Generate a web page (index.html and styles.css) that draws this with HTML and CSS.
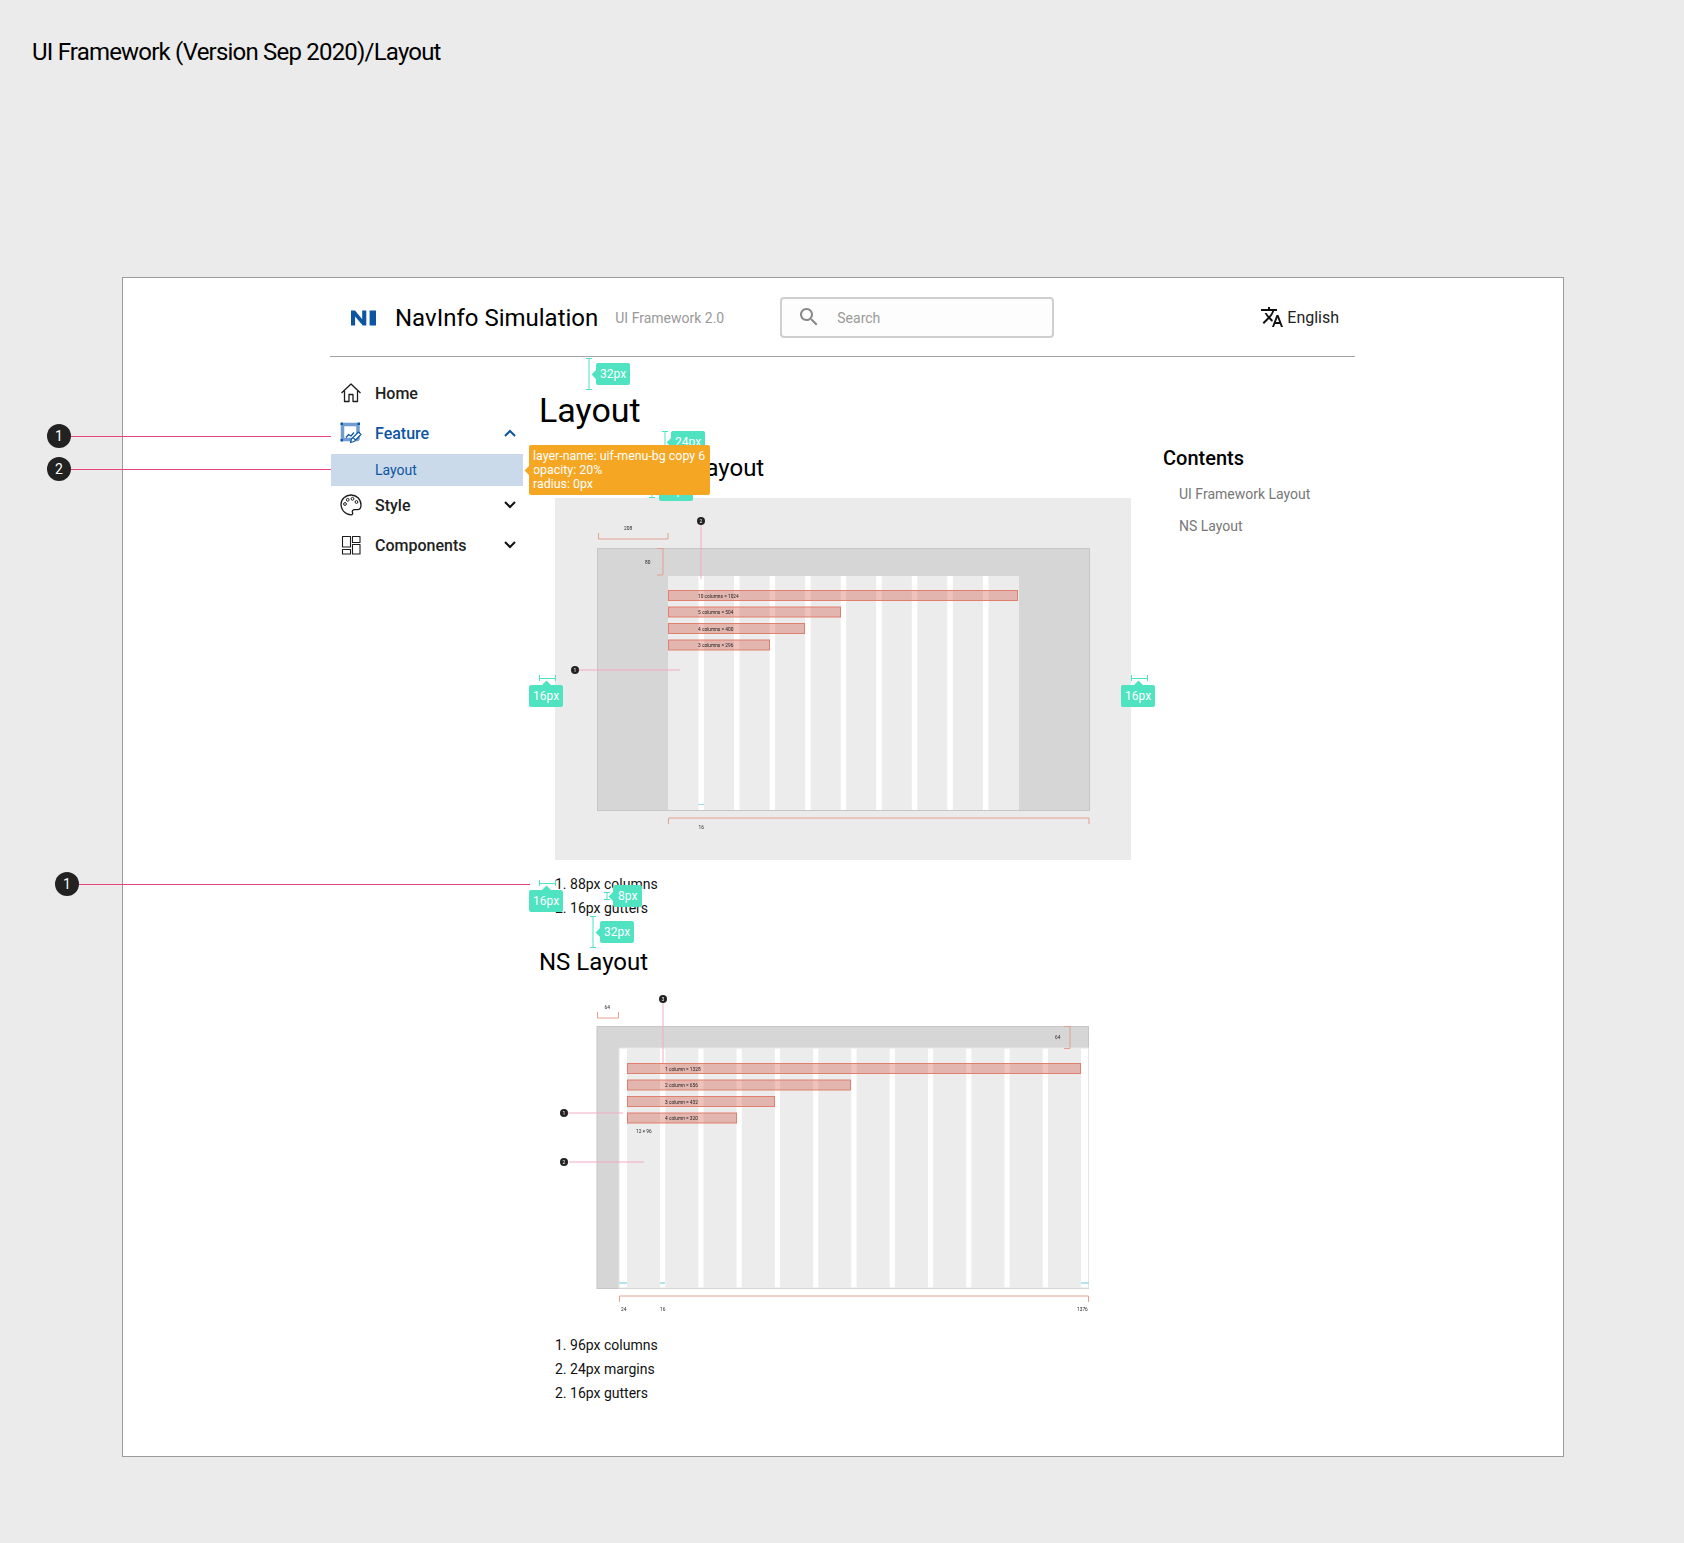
FILE: index.html
```html
<!DOCTYPE html>
<html lang="en">
<head>
<meta charset="utf-8">
<title>UI Framework (Version Sep 2020)/Layout</title>
<link rel="stylesheet" href="styles.css">
</head>
<body>
<div class="page">
  <h1 class="doc-title">UI Framework (Version Sep 2020)/Layout</h1>

  <div class="frame">
    <div class="app">
      <header class="topbar">
        <svg class="logo" viewBox="0 0 26 16" width="26" height="16"><path class="logo-mark" d="M0 15.500V.500h4L11.200 9.200V.500h4.100v15h-3.500L4.100 6.400v9.100zM18.600.500h6.400v15h-6.400z"/></svg>
        <span class="brand">NavInfo Simulation</span>
        <span class="version">UI Framework 2.0</span>
        <div class="search">
          <svg class="search-icon" viewBox="0 0 24 24" width="24" height="24"><path d="M15.500 14h-.79l-.28-.27C15.410 12.590 16 11.110 16 9.500 16 5.910 13.090 3 9.500 3S3 5.910 3 9.500 5.910 16 9.500 16c1.610 0 3.090-.59 4.230-1.570l.27.28v.79l5 4.990L20.490 19l-4.990-5zm-6 0C7.010 14 5 11.990 5 9.500S7.010 5 9.500 5 14 7.010 14 9.500 11.990 14 9.500 14z"/></svg>
          <span class="search-text">Search</span>
        </div>
        <div class="lang">
          <svg viewBox="0 0 24 24" width="24" height="24"><path d="M12.870 15.070l-2.540-2.510.03-.03c1.740-1.940 2.980-4.170 3.710-6.530H17V4h-7V2H8v2H1v1.990h11.170C11.500 7.920 10.440 9.750 9 11.350 8.070 10.320 7.300 9.190 6.690 8h-2c.73 1.630 1.730 3.170 2.980 4.560l-5.090 5.020L4 19l5-5 3.110 3.110.76-2.040zM18.500 10h-2L12 22h2l1.120-3h4.750L21 22h2l-4.500-12zm-2.620 7l1.620-4.330L19.120 17h-3.240z"/></svg>
          <span>English</span>
        </div>
      </header>

      <div class="columns">
        <nav class="sidebar">
          <div class="nav-row">
            <svg class="nav-icon" viewBox="0 0 22 22" width="22" height="22"><path class="line-icon" d="M1.500 11L11 2l9.500 9M4.500 9v10.500h4.500v-7h4v7h4.500V9"/></svg>
            <span class="nav-label">Home</span>
          </div>
          <div class="nav-row nav-row-active">
            <svg class="nav-icon" viewBox="0 0 22 22" width="22" height="22">
              <rect class="feat-frame" x="2.500" y="2.500" width="15.500" height="15" rx="1"/>
              <g class="feat-corner"><rect x="0.500" y="0.500" width="2.500" height="2.500"/><rect x="17.500" y="0.500" width="2.500" height="2.500"/><rect x="0.500" y="17" width="2.500" height="2.500"/></g>
              <path class="feat-chart" d="M6 15.500l2.500-3 2.500 1.500 3-3.500"/>
              <path class="feat-pen" d="M10.500 20.500l1-3.500 7-7 2.500 2.500-7 7zM13 15.500l2.500 2.500"/>
            </svg>
            <span class="nav-label">Feature</span>
            <svg class="chevron" viewBox="0 0 12 8" width="12" height="8"><path d="M1 7l5-5 5 5"/></svg>
          </div>
          <div class="nav-sub">Layout</div>
          <div class="nav-row">
            <svg class="nav-icon" viewBox="0 0 22 22" width="22" height="22">
              <path class="line-icon" d="M11 1C5.500 1 1 5.200 1 10.500S5.500 20.800 11 20.800c1.500 0 2-1 1.500-2.200-.6-1.500.3-3 2-3h3c2.300 0 3.500-1.700 3.500-4.600C21 5.200 16.500 1 11 1z"/>
              <circle class="line-icon-thin" cx="5" cy="10" r="1.400"/><circle class="line-icon-thin" cx="7.700" cy="5.800" r="1.400"/><circle class="line-icon-thin" cx="12.500" cy="4.800" r="1.400"/><circle class="line-icon-thin" cx="16.500" cy="8" r="1.400"/>
            </svg>
            <span class="nav-label">Style</span>
            <svg class="chevron chevron-dark" viewBox="0 0 12 8" width="12" height="8"><path d="M1 1l5 5 5-5"/></svg>
          </div>
          <div class="nav-row">
            <svg class="nav-icon" viewBox="0 0 22 22" width="22" height="22">
              <path class="line-icon line-icon-fine" d="M2.500 2.500h8v10.500h-8zM12.500 2.500h7.500v6h-7.500zM2.500 15.500h8v4.500h-8zM12.500 10.500h7.500v9.500h-7.500z"/>
            </svg>
            <span class="nav-label">Components</span>
            <svg class="chevron chevron-dark" viewBox="0 0 12 8" width="12" height="8"><path d="M1 1l5 5 5-5"/></svg>
          </div>
        </nav>

        <main class="content">
          <h2 class="page-title">Layout</h2>
          <h3 class="section-title">UI Framework Layout</h3>

          <svg class="figure figure-grey" viewBox="0 0 576 362" width="576" height="362">
            <rect class="fig-dark" x="42.500" y="50.500" width="492" height="262"/>
            <rect class="fig-white" x="113.500" y="78" width="350" height="234"/>
            <g class="fig-cols">
              <rect x="113.500" y="78" width="30" height="234"/><rect x="149" y="78" width="30" height="234"/><rect x="184.600" y="78" width="30" height="234"/><rect x="220.100" y="78" width="30" height="234"/><rect x="255.700" y="78" width="30" height="234"/><rect x="291.200" y="78" width="30" height="234"/><rect x="326.800" y="78" width="30" height="234"/><rect x="362.300" y="78" width="30" height="234"/><rect x="397.900" y="78" width="30" height="234"/><rect x="433.500" y="78" width="30" height="234"/>
            </g>
            <g class="fig-bars">
              <rect x="113.500" y="92.500" width="349" height="10"/><rect x="113.500" y="109" width="172" height="10"/><rect x="113.500" y="125.500" width="136" height="10"/><rect x="113.500" y="142" width="101" height="10"/>
            </g>
            <g class="fig-label">
              <text x="143" y="99.500">10 columns = 1024</text><text x="143" y="116">5 columns = 504</text><text x="143" y="132.500">4 columns = 400</text><text x="143" y="149">3 columns = 296</text>
              <text x="69" y="32">208</text><text x="90" y="66">80</text><text x="143.500" y="331">16</text>
            </g>
            <path class="fig-bracket" d="M43.500 35v6h69.500v-6M102 50.500h6v26.500h-6M113.500 326v-6h420.500v6"/>
            <path class="fig-cyan" d="M143 306.500h6"/>
            <path class="fig-pink" d="M146 27v54M24 172h101"/>
            <circle class="fig-dot" cx="146" cy="23" r="4"/><circle class="fig-dot" cx="20" cy="172" r="4"/>
            <g class="fig-dot-text"><text x="146" y="25">2</text><text x="20" y="174">1</text></g>
          </svg>

          <ol class="notes notes-a">
            <li>1. 88px columns</li>
            <li>2. 16px gutters</li>
          </ol>

          <h3 class="section-title section-title-ns">NS Layout</h3>

          <svg class="figure figure-plain" viewBox="0 0 576 335" width="576" height="335">
            <rect class="fig-dark" x="42" y="28.500" width="491.500" height="262"/>
            <rect class="fig-white fig-white-edge" x="64" y="50" width="469.500" height="240"/>
            <g class="fig-cols">
              <rect x="72" y="50" width="33" height="240"/><rect x="110.300" y="50" width="33" height="240"/><rect x="148.500" y="50" width="33" height="240"/><rect x="186.800" y="50" width="33" height="240"/><rect x="225.100" y="50" width="33" height="240"/><rect x="263.300" y="50" width="33" height="240"/><rect x="301.600" y="50" width="33" height="240"/><rect x="339.900" y="50" width="33" height="240"/><rect x="378.200" y="50" width="33" height="240"/><rect x="416.400" y="50" width="33" height="240"/><rect x="454.700" y="50" width="33" height="240"/><rect x="493" y="50" width="33" height="240"/>
            </g>
            <g class="fig-bars">
              <rect x="72.500" y="65.500" width="453" height="10"/><rect x="72.500" y="82" width="223" height="10"/><rect x="72.500" y="98.500" width="147" height="10"/><rect x="72.500" y="115" width="109" height="10"/>
            </g>
            <g class="fig-label">
              <text x="110" y="72.500">1 column = 1328</text><text x="110" y="89">2 column = 656</text><text x="110" y="105.500">3 column = 432</text><text x="110" y="122">4 column = 320</text>
              <text x="81" y="135">12 × 96</text><text x="49.500" y="11">64</text><text x="500" y="41">64</text>
              <text x="66" y="313">24</text><text x="105" y="313">16</text><text x="522" y="313">1376</text>
            </g>
            <path class="fig-bracket" d="M42.500 14v6h21v-6M509 28.500h6v22h-6M64.500 304v-6h469v6"/>
            <path class="fig-cyan fig-cyan-thick" d="M64 285h8M105 285h5M526 285h8"/>
            <path class="fig-pink" d="M108 5v60M13 115h55M14 164h75"/>
            <circle class="fig-dot" cx="108" cy="1" r="4"/><circle class="fig-dot" cx="9" cy="115" r="4"/><circle class="fig-dot" cx="9" cy="164" r="4"/>
            <g class="fig-dot-text"><text x="108" y="3">3</text><text x="9" y="117">1</text><text x="9" y="166">2</text></g>
          </svg>

          <ol class="notes notes-b">
            <li>1. 96px columns</li>
            <li>2. 24px margins</li>
            <li>2. 16px gutters</li>
          </ol>
        </main>

        <aside class="toc">
          <div class="toc-title">Contents</div>
          <div class="toc-item">UI Framework Layout</div>
          <div class="toc-item">NS Layout</div>
        </aside>
      </div>
    </div>
  </div>

  <!-- Annotation layer: redline marks drawn over the page -->
  <svg class="redlines" viewBox="0 0 1684 1543" width="1684" height="1543">
    <path class="redline-pink" d="M71 436.500h260M71 469.500h260M79 884.500h451"/>
    <path class="redline-teal" d="M586 358.500h6M589 358.500v31M586 389.500h6M662 431.500h6M665 431.500v20M649 497.500h6M652 480v17.500M539.500 675v6M539.500 678.500h16M555.500 675v6M1131.500 675v6M1131.500 678.500h16M1147.500 675v6M539.500 880v6M539.500 883.500h16M555.500 880v6M604 892.500h6M607 892.500v7M604 899.500h6M590 916.500h6M593 916.500v31M590 947.500h6"/>
  </svg>
  <span class="callout callout-a">1</span>
  <span class="callout callout-b">2</span>
  <span class="callout callout-c">1</span>

  <span class="tag tag-left tag-32a">32px</span>
  <span class="tag tag-left tag-24">24px</span>
  <span class="tag tag-left tag-hidden">16px</span>
  <span class="tag tag-up tag-16a">16px</span>
  <span class="tag tag-up tag-16b">16px</span>
  <span class="tag tag-up tag-16c">16px</span>
  <span class="tag tag-left tag-8">8px</span>
  <span class="tag tag-left tag-32b">32px</span>
  <div class="layer-tip">layer-name: uif-menu-bg copy 6<br>opacity: 20%<br>radius: 0px</div>
</div>
</body>
</html>
```

FILE: styles.css
```css
* { box-sizing: border-box; }
html, body { margin: 0; padding: 0; }
body { background: #ebebeb; font-family: Roboto, "Liberation Sans", sans-serif; color: #000; }
.page { position: relative; width: 1684px; height: 1543px; overflow: hidden; }

.doc-title { margin: 0; padding: 37px 0 0 32px; height: 277px; font-size: 24px; line-height: 30px; font-weight: 400; letter-spacing: -0.8px; }

.frame { width: 1442px; height: 1180px; margin-left: 122px; background: #fff; border: 1px solid #9b9b9b; }
.app { width: 1025px; margin-left: 207px; }

.topbar { display: flex; align-items: center; height: 79px; border-bottom: 1px solid #a3a3a3; padding-left: 21px; }
.logo { flex: none; margin-top: 2px; }
.brand { margin: 2px 0 0 18px; font-size: 24px; white-space: nowrap; }
.logo-mark { fill: #0b55a3; }
.version { margin: 2px 0 0 17px; font-size: 14px; color: #999; white-space: nowrap; width: 165px; }
.search { display: flex; align-items: center; width: 274px; height: 41px; padding-left: 15px; background: #fdfdfd; border: 2px solid #cfcfcf; border-radius: 4px; }
.search-icon { fill: #888; flex: none; }
.search-text { margin: 2px 0 0 16px; font-size: 14px; color: #999; }
.lang { display: flex; align-items: center; gap: 3px; margin-left: 206px; font-size: 16px; color: #222; }
.lang svg { fill: #111; flex: none; }

.columns { display: flex; }

.sidebar { width: 192px; margin-left: 1px; padding-top: 17px; flex: none; }
.nav-row { display: flex; align-items: center; height: 40px; padding: 0 0 2px 9px; }
.nav-icon { flex: none; }
.nav-label { margin-left: 13px; font-size: 16px; font-weight: 500; color: #222; flex: 1; }
.nav-row-active .nav-label { color: #0b55a3; }
.line-icon { fill: none; stroke: #1c1c1c; stroke-width: 1.300; stroke-linejoin: round; }
.line-icon-fine { stroke-width: 1.100; }
.line-icon-thin { fill: none; stroke: #1c1c1c; stroke-width: 1; }
.feat-frame { fill: #fff; stroke: #6f9dd3; stroke-width: 3.500; }
.feat-corner rect { fill: #0b55a3; }
.feat-chart { fill: none; stroke: #0b55a3; stroke-width: 1.300; }
.feat-pen { fill: #fff; stroke: #0b55a3; stroke-width: 1.100; stroke-linejoin: round; }
.chevron { flex: none; margin-right: 7px; fill: none; stroke: #0b55a3; stroke-width: 2; }
.chevron-dark { stroke: #111; }
.nav-sub { height: 32px; line-height: 32px; padding-left: 44px; font-size: 14px; color: #0b55a3; background: #cbdaea; }

.content { width: 608px; margin-left: 16px; padding-top: 33px; flex: none; }
.page-title { margin: 0; font-size: 34px; line-height: 40px; font-weight: 400; }
.section-title { margin: 22px 0 14px; font-size: 24px; line-height: 32px; font-weight: 400; }
.section-title-ns { margin: 26px 0 20px; }

.figure { display: block; margin-left: 16px; overflow: visible; filter: blur(0.25px); }
.figure-grey { background: #ebebeb; }
.fig-dark { fill: #d6d6d6; stroke: #c6c6c6; stroke-width: 1; }
.fig-white { fill: #fff; }
.fig-white-edge { stroke: #e4e4e4; stroke-width: 1; }
.fig-cols rect { fill: #ececec; }
.fig-bars rect { fill: rgba(210, 80, 60, 0.35); stroke: #df7f6d; stroke-width: 1; }
.fig-label text { font-size: 4.800px; fill: #222; font-family: Roboto, sans-serif; }
.fig-bracket { fill: none; stroke: #e3a08f; stroke-width: 1; }
.fig-cyan { fill: none; stroke: #9fdcea; stroke-width: 1; }
.fig-cyan-thick { stroke-width: 1.500; }
.fig-pink { fill: none; stroke: #f3a9c4; stroke-width: 1; }
.fig-dot { fill: #222; }
.fig-dot-text text { font-size: 5px; fill: #fff; text-anchor: middle; font-family: Roboto, sans-serif; }

.notes { list-style: none; margin: 0 0 0 16px; padding: 0; font-size: 14px; line-height: 24px; color: #111; }
.notes-a { margin-top: 12px; }

.toc { padding-top: 89px; margin-left: 16px; }
.toc-title { font-size: 20px; line-height: 24px; font-weight: 500; margin-bottom: 8px; }
.toc-item { padding-left: 16px; font-size: 14px; line-height: 32px; color: #777; white-space: nowrap; }

.redlines { position: absolute; left: 0; top: 0; pointer-events: none; }
.redline-pink { fill: none; stroke: #e8457f; stroke-width: 1; }
.redline-teal { fill: none; stroke: #50e3c2; stroke-width: 1; }

.callout { position: absolute; width: 24px; height: 24px; border-radius: 50%; background: #222; color: #fff; font-size: 14px; line-height: 24px; text-align: center; }
.callout-a { left: 47px; top: 424px; }
.callout-b { left: 47px; top: 457px; }
.callout-c { left: 55px; top: 872px; }

.tag { position: absolute; height: 22px; padding: 0 4px; background: #50e3c2; color: #fff; font-size: 12px; line-height: 22px; border-radius: 2px; white-space: nowrap; }
.tag::before { content: ""; position: absolute; width: 7px; height: 7px; background: #50e3c2; transform: rotate(45deg); }
.tag-left::before { left: -3px; top: 7.500px; }
.tag-up::before { top: -3px; left: 14px; }
.tag-32a { left: 596px; top: 363px; }
.tag-24 { left: 671px; top: 431px; }
.tag-hidden { left: 659px; top: 479px; }
.tag-16a { left: 529px; top: 685px; }
.tag-16b { left: 1121px; top: 685px; }
.tag-16c { left: 529px; top: 890px; }
.tag-8 { left: 613px; top: 885px; padding: 0 5px; }
.tag-32b { left: 600px; top: 921px; }

.layer-tip { position: absolute; left: 529px; top: 445px; width: 181px; height: 50px; padding: 4px; background: #f5a623; color: #fff; font-size: 12.400px; line-height: 14px; border-radius: 2px; white-space: nowrap; }
.layer-tip::before { content: ""; position: absolute; left: -3px; top: 22px; width: 7px; height: 7px; background: #f5a623; transform: rotate(45deg); }
```
